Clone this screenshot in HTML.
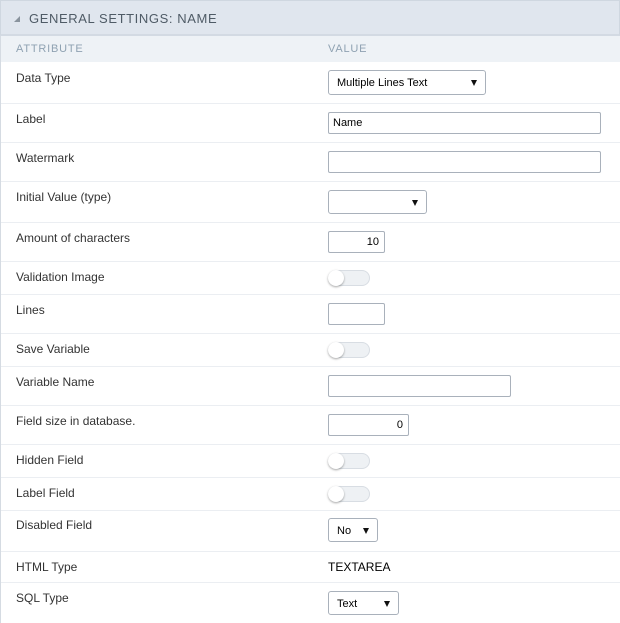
<!DOCTYPE html>
<html><head><style>
*{margin:0;padding:0;box-sizing:border-box}
body{width:620px;height:623px;background:#fff;font-family:"Liberation Sans",sans-serif;position:relative;overflow:hidden}
.hd{position:absolute;left:0;top:0;width:620px;height:36px;background:#e0e6ee;border:1px solid #cfd7e0;border-bottom:2px solid #d3dae3}
.hd span{position:absolute;left:28px;top:10px;font-size:13px;color:#4f5b66;letter-spacing:.6px}
.tri{position:absolute;left:13px;top:15px;width:0;height:0;border-left:6px solid transparent;border-bottom:6px solid #8a949e}
.ch{position:absolute;left:0;top:36px;width:620px;height:26px;background:#eef2f6;font-size:11px;color:#8fa2b2;letter-spacing:.8px}
.lb{position:absolute;left:16px;font-size:12px;color:#333}
.sep{position:absolute;left:1px;width:619px;height:1px;background:#ebeef2}
.lbd{position:absolute;left:0;top:36px;width:1px;height:587px;background:#d5dbe2}
.in{position:absolute;left:328px;border:1px solid #a9b1bb;border-radius:2px;background:#fff;font-size:11px;color:#000}
.sel{position:absolute;left:328px;border:1px solid #a9b1bb;border-radius:3px;background:#fff;font-size:11px;color:#000}
.sel .t{position:absolute;left:8px;top:6px}
.sel .a{position:absolute;right:8px;top:9px;width:0;height:0;border-left:3.5px solid transparent;border-right:3.5px solid transparent;border-top:6px solid #111}
.tg{position:absolute;left:328px;width:42px;height:16px;border:1px solid #d8dde3;border-radius:8px;background:#eef1f4}
.tg:after{content:"";position:absolute;left:-1px;top:-1px;width:16px;height:16px;border-radius:50%;background:#fff;box-shadow:0 1px 2px rgba(0,0,0,.35)}
</style></head><body>
<div class="hd"><div class="tri"></div><span>GENERAL SETTINGS: NAME</span></div>
<div class="ch"><span style="position:absolute;left:16px;top:7px">ATTRIBUTE</span><span style="position:absolute;left:328px;top:7px">VALUE</span></div>
<div class="lbd"></div>

<div class="lb" style="top:71px">Data Type</div>
<div class="sel" style="top:70px;width:158px;height:25px"><span class="t" style="left:8px">Multiple Lines Text</span><span class="a"></span></div>
<div class="sep" style="top:103px"></div>

<div class="lb" style="top:112px">Label</div>
<div class="in" style="top:112px;width:273px;height:22px"><span style="position:absolute;left:4px;top:4px">Name</span></div>
<div class="sep" style="top:142px"></div>

<div class="lb" style="top:151px">Watermark</div>
<div class="in" style="top:151px;width:273px;height:22px"></div>
<div class="sep" style="top:181px"></div>

<div class="lb" style="top:190px">Initial Value (type)</div>
<div class="sel" style="top:190px;width:99px;height:24px"><span class="a"></span></div>
<div class="sep" style="top:222px"></div>

<div class="lb" style="top:231px">Amount of characters</div>
<div class="in" style="top:231px;width:57px;height:22px"><span style="position:absolute;right:5px;top:4px">10</span></div>
<div class="sep" style="top:261px"></div>

<div class="lb" style="top:270px">Validation Image</div>
<div class="tg" style="top:270px"></div>
<div class="sep" style="top:294px"></div>

<div class="lb" style="top:303px">Lines</div>
<div class="in" style="top:303px;width:57px;height:22px"></div>
<div class="sep" style="top:333px"></div>

<div class="lb" style="top:342px">Save Variable</div>
<div class="tg" style="top:342px"></div>
<div class="sep" style="top:366px"></div>

<div class="lb" style="top:375px">Variable Name</div>
<div class="in" style="top:375px;width:183px;height:22px"></div>
<div class="sep" style="top:405px"></div>

<div class="lb" style="top:414px">Field size in database.</div>
<div class="in" style="top:414px;width:81px;height:22px"><span style="position:absolute;right:5px;top:4px">0</span></div>
<div class="sep" style="top:444px"></div>

<div class="lb" style="top:453px">Hidden Field</div>
<div class="tg" style="top:453px"></div>
<div class="sep" style="top:477px"></div>

<div class="lb" style="top:486px">Label Field</div>
<div class="tg" style="top:486px"></div>
<div class="sep" style="top:510px"></div>

<div class="lb" style="top:518px">Disabled Field</div>
<div class="sel" style="top:518px;width:50px;height:24px"><span class="t">No</span><span class="a"></span></div>
<div class="sep" style="top:551px"></div>

<div class="lb" style="top:560px">HTML Type</div>
<div style="position:absolute;left:328px;top:560px;font-size:12px;color:#000">TEXTAREA</div>
<div class="sep" style="top:582px"></div>

<div class="lb" style="top:591px">SQL Type</div>
<div class="sel" style="top:591px;width:71px;height:24px"><span class="t">Text</span><span class="a"></span></div>
</body></html>
